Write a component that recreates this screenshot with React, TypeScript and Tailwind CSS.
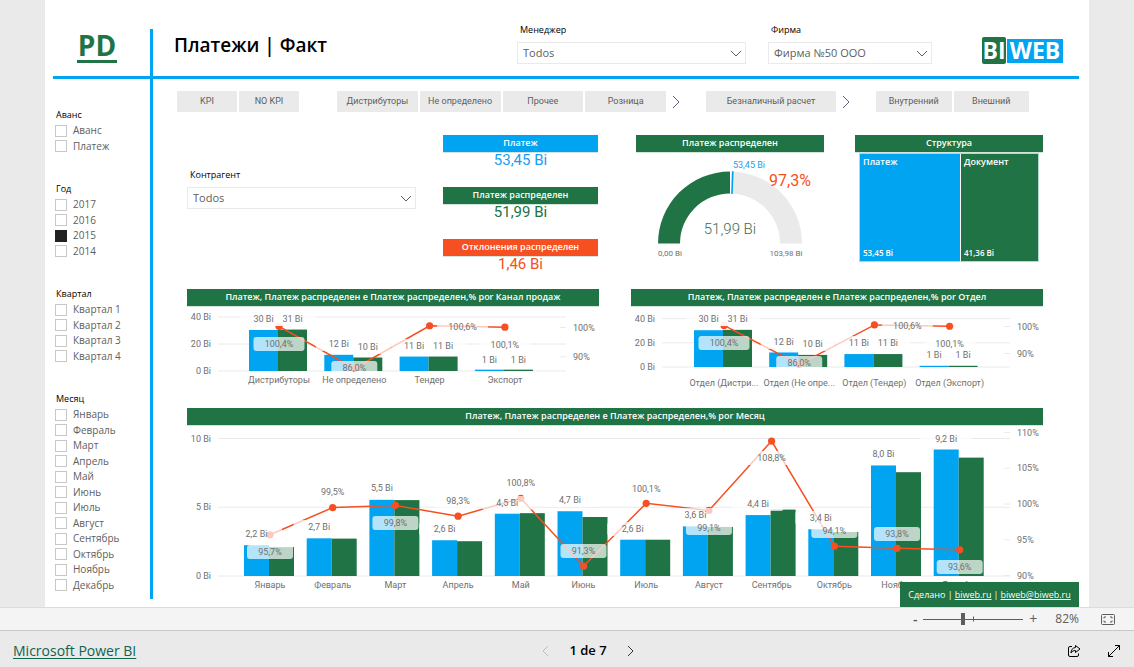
import React from 'react';

const BLUE = '#01a4f0';
const GREEN = '#207345';
const ORANGE = '#f64f22';

type Point = {
  name: string;
  a: number;
  b: number;
  pct: number;
  aY: number;
  bY?: number;
  pctY: number;
  pctDx?: number;
};

type ChartProps = {
  title: string;
  width: number;
  height: number;
  base: number;
  unit: number;
  hundred: number;
  pctUnit: number;
  first: number;
  pitch: number;
  bar: number;
  nameY: number;
  ticks: number[];
  pctTicks: number[];
  data: Point[];
};

const channels: Point[] = [
  { name: 'Дистрибуторы', a: 30.4, b: 30.7, pct: 100.4, aY: 13, bY: 13, pctY: 38 },
  { name: 'Не определено', a: 12, b: 10, pct: 86, aY: 38, bY: 41, pctY: 62 },
  { name: 'Тендер', a: 10.7, b: 10.7, pct: 100.6, aY: 40, bY: 40, pctY: 21, pctDx: 33 },
  { name: 'Экспорт', a: 1, b: 1, pct: 100.1, aY: 54, bY: 54, pctY: 39 },
];

const departments: Point[] = [
  { name: 'Отдел (Дистри...', a: 30.4, b: 30.7, pct: 100.4, aY: 13, bY: 13, pctY: 37 },
  { name: 'Отдел (Не опре...', a: 12, b: 10, pct: 86, aY: 36, bY: 38, pctY: 57 },
  { name: 'Отдел (Тендер)', a: 10.7, b: 10.7, pct: 100.6, aY: 37, bY: 37, pctY: 20, pctDx: 33 },
  { name: 'Отдел (Экспорт)', a: 1, b: 1, pct: 100.1, aY: 49, bY: 49, pctY: 38 },
];

const months: Point[] = [
  { name: 'Январь', a: 2.24, b: 2.1, pct: 95.7, aY: 109, pctY: 127 },
  { name: 'Февраль', a: 2.74, b: 2.72, pct: 99.5, aY: 102, pctY: 67 },
  { name: 'Март', a: 5.54, b: 5.52, pct: 99.8, aY: 63, pctY: 98 },
  { name: 'Апрель', a: 2.6, b: 2.53, pct: 98.3, aY: 104, pctY: 76 },
  { name: 'Май', a: 4.53, b: 4.57, pct: 100.8, aY: 78, pctY: 58 },
  { name: 'Июнь', a: 4.71, b: 4.29, pct: 91.3, aY: 75, pctY: 126 },
  { name: 'Июль', a: 2.64, b: 2.64, pct: 100.1, aY: 104, pctY: 64 },
  { name: 'Август', a: 3.61, b: 3.57, pct: 99.1, aY: 90, pctY: 103 },
  { name: 'Сентябрь', a: 4.43, b: 4.83, pct: 108.8, aY: 79, pctY: 33 },
  { name: 'Октябрь', a: 3.4, b: 3.2, pct: 94.1, aY: 93, pctY: 106 },
  { name: 'Ноябрь', a: 8.04, b: 7.55, pct: 93.8, aY: 29, pctY: 109 },
  { name: 'Декабрь', a: 9.2, b: 8.61, pct: 93.6, aY: 14, pctY: 142 },
];

const filters = [
  { title: 'Аванс', items: ['Аванс', 'Платеж'], height: 'h-[31px]' },
  { title: 'Год', items: ['2017', '2016', '2015', '2014'], height: 'h-[62px]' },
  { title: 'Квартал', items: ['Квартал 1', 'Квартал 2', 'Квартал 3', 'Квартал 4'], height: 'h-[62px]' },
  { title: 'Месяц', items: months.map((m) => m.name), height: 'h-[186px]' },
];

const buttonGroups = [
  { items: ['KPI', 'NO KPI'], width: 'w-[122px]', more: false },
  { items: ['Дистрибуторы', 'Не определено', 'Прочее', 'Розница'], width: 'w-[329px]', more: true },
  { items: ['Безналичный расчет'], width: 'w-[130px]', more: true },
  { items: ['Внутренний', 'Внешний'], width: 'w-[153px]', more: false },
];

const kpis = [
  { title: 'Платеж', value: '53,45 Bi', bg: 'bg-[#01a4f0]', color: 'text-[#1b9cf0]' },
  { title: 'Платеж распределен', value: '51,99 Bi', bg: 'bg-[#207345]', color: 'text-[#207345]' },
  { title: 'Отклонения распределен', value: '1,46 Bi', bg: 'bg-[#f64f22]', color: 'text-[#f64f22]' },
];

const Chevron: React.FC<{ d: string; className: string; box: string }> = ({ d, className, box }) => (
  <svg viewBox={box} className={className} fill="none" stroke="currentColor" aria-hidden="true">
    <path d={d} />
  </svg>
);

const PanelTitle: React.FC<{ children: React.ReactNode; bg?: string }> = ({ children, bg = 'bg-[#207345]' }) => (
  <h2 className={`h-[17px] text-center text-[9px] leading-4 font-semibold whitespace-nowrap text-white shadow-[0_1px_0_#d3e5da] ${bg}`}>
    {children}
  </h2>
);

const Dropdown: React.FC<{ id: string; label: string; value: string; className?: string }> = ({ id, label, value, className = '' }) => (
  <div className={className}>
    <label htmlFor={id} className="mb-1 block px-[3px] text-[9px] leading-4 font-medium text-black">
      {label}
    </label>
    <div className="relative">
      <select
        id={id}
        className="block h-[22px] w-full appearance-none border border-[#eaeaea] bg-white pr-6 pl-[5px] text-[11px] text-[#605e5c]"
      >
        <option>{value}</option>
      </select>
      <Chevron
        d="M1 1l5 5 5-5"
        box="0 0 12 7"
        className="pointer-events-none absolute top-2 right-1 h-[7px] w-3 text-[#605e5c]"
      />
    </div>
  </div>
);

const ComboChart: React.FC<ChartProps> = (c) => {
  const x = (i: number) => c.first + c.pitch * i;
  const y = (v: number) => c.base - v * c.unit;
  const p = (v: number) => c.hundred + (100 - v) * c.pctUnit;
  const comma = (v: number) => v.toFixed(1).replace('.', ',');
  const amount = (v: number) => (c.data[0].bY ? String(Math.round(v)) : comma(v));
  const right = c.width - 33;

  const labels = c.data.flatMap((d, i) => [
    { key: `${d.name}-a`, x: x(i) - c.bar / 2, y: d.aY, text: `${amount(d.a)} Bi` },
    ...(d.bY ? [{ key: `${d.name}-b`, x: x(i) + c.bar / 2, y: d.bY, text: `${amount(d.b)} Bi` }] : []),
    { key: `${d.name}-pct`, x: x(i) + 1 + (d.pctDx ?? 0), y: d.pctY, text: `${comma(d.pct)}%` },
  ]);
  const labelWidth = (text: string) => text.length * 5 + 21;

  return (
    <section className="min-w-0 flex-1">
      <PanelTitle>{c.title}</PanelTitle>
      <svg
        viewBox={`0 0 ${c.width} ${c.height}`}
        className="block h-auto w-full font-['Roboto',sans-serif] text-[9px]"
        fill="#707070"
        role="img"
        aria-label={c.title}
      >
        {c.ticks.map((t) => (
          <g key={t}>
            <line x1={31} x2={right} y1={y(t)} y2={y(t)} stroke="#eaeaea" />
            <text x={24} y={y(t) + 3} textAnchor="end">{t} Bi</text>
          </g>
        ))}
        {c.pctTicks.map((t) => (
          <g key={t}>
            <line x1={right - 6} x2={right} y1={p(t)} y2={p(t)} stroke="#eaeaea" />
            <text x={right + 7} y={p(t) + 3}>{t}%</text>
          </g>
        ))}
        {c.data.map((d, i) => (
          <g key={d.name}>
            <rect x={x(i) - c.bar} y={y(d.a)} width={c.bar} height={c.base - y(d.a)} fill={BLUE} />
            <rect x={x(i)} y={y(d.b)} width={c.bar} height={c.base - y(d.b)} fill={GREEN} />
            <text x={x(i) + 1} y={c.nameY + 3} textAnchor="middle">
              {d.name}
            </text>
          </g>
        ))}
        <polyline
          points={c.data.map((d, i) => `${x(i) + 1},${p(d.pct)}`).join(' ')}
          fill="none"
          stroke={ORANGE}
          strokeWidth={1.5}
        />
        {c.data.map((d, i) => (
          <circle key={d.name} cx={x(i) + 1} cy={p(d.pct)} r={3.6} fill={ORANGE} />
        ))}
        {labels.map((l) => (
          <rect
            key={l.key}
            x={l.x - labelWidth(l.text) / 2}
            y={l.y - 7}
            width={labelWidth(l.text)}
            height={14}
            rx={3}
            fill="#fff"
            opacity={0.7}
          />
        ))}
        {labels.map((l) => (
          <text key={l.key} x={l.x} y={l.y + 3} textAnchor="middle">{l.text}</text>
        ))}
      </svg>
    </section>
  );
};

const Gauge: React.FC = () => (
  <svg viewBox="0 0 188 109" className="block h-auto w-full font-['Roboto',sans-serif]" role="img" aria-label="Платеж распределен">
    <path d="M22 91.5A72 72 0 0 1 94 19.5V41.5A50 50 0 0 0 44 91.5Z" fill={GREEN} />
    <path d="M94 19.5A72 72 0 0 1 166 91.5H144A50 50 0 0 0 94 41.5Z" fill="#eaeaea" />
    <path d="M94.5 19V42" stroke="#fff" />
    <path d="M96.8 19.2L96 42" stroke={BLUE} strokeWidth={1.6} />
    <g textAnchor="middle">
      <text x={113} y={16} fontSize={9} fill="#1b9cf0">53,45 Bi</text>
      <text x={154} y={34} fontSize={16} fill={ORANGE}>97,3%</text>
      <text x={94} y={82} fontSize={15} fontWeight={300} fill="#3f6b52">51,99 Bi</text>
      <text x={34} y={104} fontSize={8} fill="#707070">0,00 Bi</text>
      <text x={150} y={104} fontSize={8} fill="#707070">103,98 Bi</text>
    </g>
  </svg>
);

const Header: React.FC = () => (
  <header className="flex h-[79px] border-b-[3px] border-[#01a4f0]">
    <div className="mt-[29px] w-[100px] shrink-0 border-r-[3px] border-[#01a4f0] pt-px text-center">
      <a href="#home" className="ml-[-9px] inline-block border-b-[3px] border-[#207345] px-px text-[28px] leading-[30px] font-bold text-[#207345]">
        PD
      </a>
    </div>
    <div className="flex flex-1 items-start pt-[22px] pr-4 pl-[21px]">
      <h1 className="mt-[9px] flex-1 text-[19px] leading-7 font-semibold whitespace-nowrap text-black">Платежи | Факт</h1>
      <Dropdown id="manager" label="Менеджер" value="Todos" className="w-[229px]" />
      <Dropdown id="firm" label="Фирма" value="Фирма №50 ООО" className="ml-[22px] w-[164px]" />
      <div className="mt-[15px] ml-[50px] flex items-center gap-px text-[23px] leading-6 font-bold text-white">
        <span className="flex h-[27px] w-6 items-center justify-center rounded-xs bg-[#207345] pb-[2px]">BI</span>
        <span className="flex h-6 w-14 items-center justify-center bg-[#01a4f0] pb-[2px]">WEB</span>
      </div>
    </div>
  </header>
);

const Sidebar: React.FC = () => (
  <aside className="flex w-[100px] shrink-0 flex-col gap-[27px] border-r-[3px] border-[#01a4f0] pt-7 pl-[2px]">
    {filters.map((f) => (
      <fieldset key={f.title}>
        <legend className="h-4 pl-px text-[9px] leading-4 font-medium text-black">{f.title}</legend>
        <div className={`grid auto-rows-fr ${f.height}`}>
          {f.items.map((item) => (
            <label key={item} className="flex min-h-0 items-center gap-[6px] text-[10px] leading-[15px] font-medium text-[#605e5c]">
              <input
                type="checkbox"
                defaultChecked={item === '2015'}
                className="h-3 w-3 shrink-0 appearance-none border border-[#c8c8c8] bg-white checked:border-[#222] checked:bg-[#222]"
              />
              {item}
            </label>
          ))}
        </div>
      </fieldset>
    ))}
  </aside>
);

const ButtonRow: React.FC = () => (
  <div className="flex h-[21px] pl-6">
    {buttonGroups.map((g, i) => (
      <div key={g.items[0]} className={`flex items-center ${i === 0 ? '' : i === 1 ? 'ml-[38px]' : 'ml-6'}`}>
        <div className={`flex h-full gap-[2px] ${g.width}`}>
          {g.items.map((item) => (
            <button key={item} type="button" className="flex-1 bg-[#eaeaea] font-['Roboto',sans-serif] text-[9px] whitespace-nowrap text-[#605e5c]">
              {item}
            </button>
          ))}
        </div>
        {g.more && (
          <button type="button" aria-label="Далее" className="ml-[6px]">
            <Chevron d="M1 1l6 6-6 6" box="0 0 10 14" className="h-[14px] w-[10px] text-[#605e8c]" />
          </button>
        )}
      </div>
    ))}
  </div>
);

const Summary: React.FC = () => (
  <div className="flex items-start">
    <Dropdown id="contractor" label="Контрагент" value="Todos" className="mt-8 w-[229px]" />
    <div className="ml-[27px] flex w-[155px] flex-col gap-[19px]">
      {kpis.map((k) => (
        <div key={k.title}>
          <PanelTitle bg={k.bg}>{k.title}</PanelTitle>
          <p className={`text-center font-['Roboto',sans-serif] text-[15px] leading-4 ${k.color}`}>{k.value}</p>
        </div>
      ))}
    </div>
    <div className="ml-[38px] w-[188px]">
      <PanelTitle>Платеж распределен</PanelTitle>
      <Gauge />
    </div>
    <div className="ml-[31px] w-[188px]">
      <PanelTitle>Структура</PanelTitle>
      <div className="mx-1 mt-px flex h-[109px] gap-px border border-[#b5d8cc] text-[9px] leading-4 font-semibold text-white">
        <div className="flex w-[100px] flex-col justify-between bg-[#01a4f0] px-[3px]">
          <span>Платеж</span>
          <span className="text-[8px]">53,45 Bi</span>
        </div>
        <div className="flex flex-1 flex-col justify-between bg-[#207345] px-[3px]">
          <span>Документ</span>
          <span className="text-[8px]">41,36 Bi</span>
        </div>
      </div>
    </div>
  </div>
);

const StatusBar: React.FC = () => (
  <div className="flex h-6 items-center justify-end border-t border-b border-t-[#dcdcdc] border-b-[#c8c8c8] bg-[#f4f4f4] pr-[19px] text-[#605e5c]">
    <button type="button" aria-label="Уменьшить" className="w-4 text-sm leading-4 font-semibold">-</button>
    <div className="relative flex items-center">
      <input
        type="range"
        min={0}
        max={100}
        defaultValue={39}
        aria-label="Масштаб"
        className="h-3 w-[100px] appearance-none bg-[linear-gradient(#605e5c,#605e5c)] bg-[length:100%_1px] bg-center bg-no-repeat [&::-webkit-slider-thumb]:h-3 [&::-webkit-slider-thumb]:w-1 [&::-webkit-slider-thumb]:appearance-none [&::-webkit-slider-thumb]:bg-[#605e5c]"
      />
      <span className="pointer-events-none absolute top-1/2 left-1/2 h-[5px] w-px -translate-y-1/2 bg-[#605e5c]" />
    </div>
    <button type="button" aria-label="Увеличить" className="w-5 text-sm leading-4">+</button>
    <span className="ml-3 text-xs">82%</span>
    <button type="button" aria-label="По размеру страницы" className="ml-[22px]">
      <svg viewBox="0 0 14 11" className="h-[11px] w-[14px]" fill="none" stroke="#605e5c">
        <rect x="0.5" y="0.5" width="13" height="10" rx="1" />
        <path d="M5 3H3v1.5M9 3h2v1.5M5 8H3V6.500M9 8h2V6.500" />
      </svg>
    </button>
  </div>
);

const Footer: React.FC = () => (
  <footer className="grid h-9 grid-cols-3 items-center px-[13px] pt-1">
    <a href="#powerbi" className="text-sm text-[#0f6352] underline underline-offset-2">Microsoft Power BI</a>
    <nav className="flex items-center justify-center gap-5 pl-[42px] text-[13px] font-semibold text-black">
      <button type="button" aria-label="Предыдущая страница" disabled>
        <Chevron d="M6 1L1 6l5 5" box="0 0 7 12" className="h-3 w-[7px] text-[#bdbdbd]" />
      </button>
      <span>1 de 7</span>
      <button type="button" aria-label="Следующая страница">
        <Chevron d="M1 1l5 5-5 5" box="0 0 7 12" className="h-3 w-[7px] text-[#333]" />
      </button>
    </nav>
    <div className="flex items-center justify-end gap-[26px] text-black">
      <button type="button" aria-label="Поделиться">
        <svg viewBox="0 0 14 14" className="h-[14px] w-[14px]" fill="none" stroke="currentColor" strokeLinejoin="round">
          <path d="M5 2.500H3A1.500 1.500 0 0 0 1.500 4v7A1.500 1.500 0 0 0 3 12.500h7a1.500 1.500 0 0 0 1.500-1.500V9.500" />
          <path d="M8.500 1.500L13 5 8.500 8.500V6.500C6.500 6.400 5 7.300 4 9c0-3 1.500-5.200 4.500-5.500Z" />
        </svg>
      </button>
      <button type="button" aria-label="Во весь экран">
        <svg viewBox="0 0 14 14" className="h-[14px] w-[14px]" fill="none" stroke="currentColor">
          <path d="M1.500 12.500l11-11M8 1.500h4.500V6M1.500 8v4.500H6" />
        </svg>
      </button>
    </div>
  </footer>
);

const App: React.FC = () => {
  return (
    <div className="flex min-h-screen flex-col bg-[#eaeaea] font-['Open_Sans','Noto_Sans',sans-serif]">
      <div className="flex-1 px-[45px]">
        <main className="relative bg-white pr-[10px] pb-2 pl-2">
          <Header />
          <div className="flex">
            <Sidebar />
            <div className="min-w-0 flex-1 pt-3">
              <ButtonRow />
              <div className="flex flex-col pt-[23px] pr-9 pl-[34px]">
                <Summary />
                <div className="mt-[17px] flex gap-8">
                  <ComboChart
                    title="Платеж, Платеж распределен е Платеж распределен,% por Канал продаж"
                    width={412} height={85} base={65} unit={1.35} hundred={21.5} pctUnit={2.93}
                    first={91} pitch={75.3} bar={29} nameY={74}
                    ticks={[0, 20, 40]} pctTicks={[100, 90]} data={channels}
                  />
                  <ComboChart
                    title="Платеж, Платеж распределен е Платеж распределен,% por Отдел"
                    width={412} height={85} base={61} unit={1.21} hundred={20.5} pctUnit={2.7}
                    first={92} pitch={75.2} bar={29} nameY={77}
                    ticks={[0, 20, 40]} pctTicks={[100, 90]} data={departments}
                  />
                </div>
                <div className="mt-[17px] flex">
                  <ComboChart
                    title="Платеж, Платеж распределен е Платеж распределен,% por Месяц"
                    width={856} height={174} base={151} unit={13.75} hundred={79} pctUnit={7.15}
                    first={82} pitch={62.7} bar={25} nameY={160}
                    ticks={[0, 5, 10]} pctTicks={[110, 105, 100, 95, 90]} data={months}
                  />
                </div>
              </div>
            </div>
          </div>
          <div className="absolute right-[10px] bottom-0 flex h-[25px] w-[179px] items-center justify-center gap-[2px] bg-[#207345] text-[9px] font-medium whitespace-nowrap text-white">
            <span>Сделано |</span>
            <a href="#biweb" className="underline">biweb.ru</a>
            <span>|</span>
            <a href="#mail" className="underline">biweb@biweb.ru</a>
          </div>
        </main>
      </div>
      <StatusBar />
      <Footer />
    </div>
  );
};

export default App;
